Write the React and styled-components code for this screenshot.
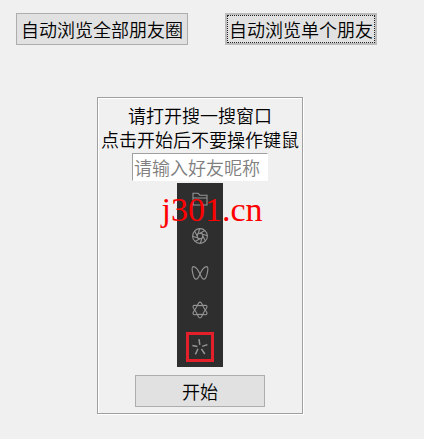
import React, { useState } from "react";
import styled, { createGlobalStyle } from "styled-components";

const GlobalStyle = createGlobalStyle`
    * {
        box-sizing: border-box;
    }

    body {
        margin: 0;
        background: #f0f0f0;
        color: #000;
        font-family: "Noto Sans CJK SC", sans-serif;
        font-size: 18px;
        font-weight: 350;
        line-height: 24px;
    }
`;

//

const Page = styled.main`
    position: relative;
    padding: 13px 40px 24px 16px;
`;

const Toolbar = styled.div`
    display: flex;
    gap: 37px;
`;

const Button = styled.button`
    height: 32px;
    padding: 0 4px;
    border: 1px solid #adadad;
    background: #e1e1e1;
    color: inherit;
    font: inherit;
    white-space: nowrap;
`;

const ModeButton = styled(Button)`
    border: ${(p) => (p.$active ? "2px solid #bcbcbc" : "1px solid #adadad")};
    padding: 0 ${(p) => (p.$active ? "2px" : "4px")};
    outline: ${(p) => (p.$active ? "1px dotted #222" : "none")};
    outline-offset: -3px;
`;

const StartButton = styled(Button)`
    width: 130px;
    margin-top: 8px;
`;

//

const Panel = styled.form`
    display: flex;
    flex-direction: column;
    align-items: center;
    width: fit-content;
    margin: 52px auto 0;
    padding: 5px 3px 6px;
    border: 1px solid #a0a0a0;
    box-shadow: 1px 1px 0 #fff, inset 1px 1px 0 #fff;
`;

const Hint = styled.label`
    text-align: center;
    white-space: pre-line;
`;

const NameInput = styled.input`
    width: 136px;
    height: 28px;
    margin: 2px 0;
    padding: 0 1px;
    border: 1px solid #fff;
    border-top-color: #a0a0a0;
    border-left-color: #a0a0a0;
    outline: none;
    background: #fff;
    font: inherit;

    &::placeholder {
        color: #808080;
        opacity: 1;
    }
`;

const Sidebar = styled.div`
    display: flex;
    flex-direction: column;
    align-items: center;
    gap: 7px;
    width: 46px;
    height: 184px;
    padding-top: 1px;
    background: #2e2e2e;
`;

const IconCell = styled.div`
    display: grid;
    place-items: center;
    width: 28px;
    height: 30px;
    border: 3px solid ${(p) => (p.$marked ? "#e3202a" : "transparent")};
`;

const Watermark = styled.div`
    position: absolute;
    top: 193px;
    left: 0;
    right: 0;
    color: #f00;
    font-family: "Liberation Serif", serif;
    font-size: 34px;
    font-weight: 400;
    line-height: 34px;
    text-align: center;
    pointer-events: none;
`;

//

const Svg = ({ children }) => (
    <svg
        width="18"
        height="18"
        viewBox="0 0 18 18"
        fill="none"
        stroke="#959595"
        strokeWidth="1.1"
        aria-hidden="true"
    >
        {children}
    </svg>
);

const spin = (count, draw) =>
    Array.from({ length: count }, (_, i) => (
        <g key={i} transform={`rotate(${(360 / count) * i} 9 9)`}>
            {draw}
        </g>
    ));

const FolderIcon = () => (
    <Svg>
        <path d="M2 15V3.2h5l1.8 2H16V15zM2 8h14" />
    </Svg>
);

const ApertureIcon = () => (
    <Svg>
        <circle cx="9" cy="9" r="7.4" />
        <circle cx="9" cy="9" r="2.8" />
        {spin(8, <path d="M9 6.2 14 3.6" />)}
    </Svg>
);

const ButterflyIcon = () => (
    <Svg>
        <path d="M9 10C7.4 6.4 4.4 2.6 2.4 2.6C.4 2.6 1.2 7.4 2 10.4C2.8 13.6 3.6 15.2 5 15.2C6.8 15.2 8 12.4 9 10C10 12.4 11.2 15.2 13 15.2C14.4 15.2 15.2 13.6 16 10.4C16.8 7.4 17.6 2.6 15.6 2.6C13.6 2.6 10.6 6.4 9 10Z" />
    </Svg>
);

const FlowerIcon = () => (
    <Svg>
        {spin(6, <path d="M5.2 6.8L7.6 2Q9 .2 10.4 2L12.8 6.8" />)}
    </Svg>
);

const SparkIcon = () => (
    <Svg>
        <path
            strokeWidth="1.5"
            d="M8 1.2 8.8 6.8M1.4 7.4 6.4 8.6M11.2 8.4 16.4 6.6M7 10.8 4.4 16.4M10.4 10.8 13.8 16"
        />
    </Svg>
);

//

const App = () => {
    const [mode, setMode] = useState("single");
    const [name, setName] = useState("");

    return (
        <Page>
            <GlobalStyle />
            <Toolbar>
                <ModeButton type="button" $active={mode === "all"} onClick={() => setMode("all")}>
                    自动浏览全部朋友圈
                </ModeButton>
                <ModeButton type="button" $active={mode === "single"} onClick={() => setMode("single")}>
                    自动浏览单个朋友
                </ModeButton>
            </Toolbar>
            <Panel onSubmit={(e) => e.preventDefault()}>
                <Hint htmlFor="nickname">{"请打开搜一搜窗口\n点击开始后不要操作键鼠"}</Hint>
                <NameInput
                    id="nickname"
                    placeholder="请输入好友昵称"
                    value={name}
                    onChange={(e) => setName(e.target.value)}
                />
                <Sidebar>
                    <IconCell><FolderIcon /></IconCell>
                    <IconCell><ApertureIcon /></IconCell>
                    <IconCell><ButterflyIcon /></IconCell>
                    <IconCell><FlowerIcon /></IconCell>
                    <IconCell $marked><SparkIcon /></IconCell>
                </Sidebar>
                <StartButton type="submit">开始</StartButton>
            </Panel>
            <Watermark>j301.cn</Watermark>
        </Page>
    );
};

export default App;
